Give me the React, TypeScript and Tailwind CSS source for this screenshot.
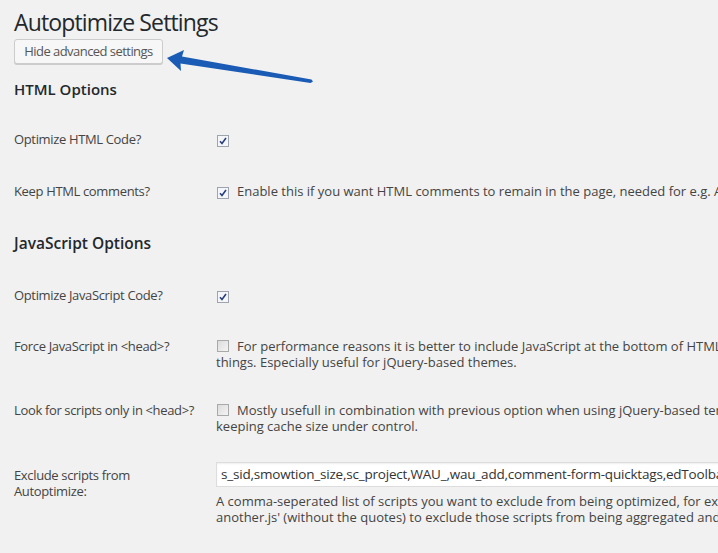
import React from 'react';

const font = { fontFamily: '"Open Sans", "Liberation Sans", sans-serif' };

function Checkbox({ checked }: { checked?: boolean }) {
  return (
    <span
      className={`inline-flex h-[12px] w-[12px] shrink-0 items-center justify-center border align-[-1px] ${
        checked ? 'border-[#9da4ad] bg-[#f4f6fa]' : 'border-[#a9a9a9] bg-gradient-to-br from-[#dcdcdc] to-[#f4f4f4]'
      }`}
    >
      {checked && (
        <svg width="8" height="8" viewBox="0 0 8 8">
          <path d="M1 4.2 L3 6.5 L7 1" fill="none" stroke="#27407a" strokeWidth="1.6" />
        </svg>
      )}
    </span>
  );
}

function Row({ label, className, children }: { label: React.ReactNode; className: string; children: React.ReactNode }) {
  return (
    <div className={`flex ${className}`}>
      <div className="w-[202px] shrink-0 text-[13px] leading-[16px] tracking-[-0.35px] text-[#444]">{label}</div>
      <div className="min-w-0 flex-1 whitespace-nowrap text-[13px] leading-[16px] text-[#444]">{children}</div>
    </div>
  );
}

export default function App() {
  return (
    <div className="relative h-[553px] w-[718px] overflow-hidden bg-[#f1f1f1] pl-[14px]" style={font}>
      <h1 className="pt-[8px] text-[23px] leading-[29px] tracking-[-0.85px] text-[#23282d]">Autoptimize Settings</h1>
      <button className="mt-[2px] h-[25px] w-[149px] rounded-[3px] border border-[#cccccc] bg-[#f7f7f7] text-[13px] leading-[23px] tracking-[-0.55px] text-[#555] shadow-[0_1px_0_#ccc]">
        Hide advanced settings
      </button>

      <h2 className="mt-[15px] text-[15px] font-semibold leading-[20px] text-[#23282d]">HTML Options</h2>

      <Row label="Optimize HTML Code?" className="mt-[32px]">
        <span className="pl-[1px]"><Checkbox checked /></span>
      </Row>
      <Row label="Keep HTML comments?" className="mt-[36px]">
        <span className="pl-[1px]"><Checkbox checked /></span>
        <span className="pl-[8px]">Enable this if you want HTML comments to remain in the page, needed for e.g. AdSense to function properly.</span>
      </Row>

      <h2 className="mt-[34px] text-[15.5px] font-semibold leading-[20px] text-[#23282d]">JavaScript Options</h2>

      <Row label="Optimize JavaScript Code?" className="mt-[34px]">
        <span className="pl-[1px]"><Checkbox checked /></span>
      </Row>
      <Row label="Force JavaScript in <head>?" className="mt-[35px]">
        <div>
          <span className="pl-[1px]"><Checkbox /></span>
          <span className="pl-[8px]">For performance reasons it is better to include JavaScript at the bottom of HTML, but this might break some</span>
        </div>
        <div>things. Especially useful for jQuery-based themes.</div>
      </Row>
      <Row label="Look for scripts only in <head>?" className="mt-[32px]">
        <div>
          <span className="pl-[1px]"><Checkbox /></span>
          <span className="pl-[8px]">Mostly usefull in combination with previous option when using jQuery-based templates, but might help</span>
        </div>
        <div>keeping cache size under control.</div>
      </Row>
      <Row
        label={
          <div className="pt-[5px]">
            Exclude scripts from
            <br />
            Autoptimize:
          </div>
        }
        className="mt-[28px]"
      >
        <div className="h-[25px] w-[600px] border border-[#dddddd] bg-white pl-[4px] text-[13.5px] leading-[23px] tracking-[-0.2px] text-[#333] shadow-[inset_0_1px_2px_rgba(0,0,0,0.07)]">
          s_sid,smowtion_size,sc_project,WAU_,wau_add,comment-form-quicktags,edToolbar,ch_href,ch_type
        </div>
        <div className="mt-[6px]">A comma-seperated list of scripts you want to exclude from being optimized, for example 'whatever.js,</div>
        <div>another.js' (without the quotes) to exclude those scripts from being aggregated and minimized by Autoptimize.</div>
      </Row>

      <svg className="pointer-events-none absolute left-0 top-0" width="718" height="553" viewBox="0 0 718 553">
        <polygon
          points="167,58 184,50 182,56.5 311.5,79.5 313,81.5 310.5,83 180.5,63.5 181,71"
          fill="#1a5bb5"
        />
      </svg>
    </div>
  );
}
